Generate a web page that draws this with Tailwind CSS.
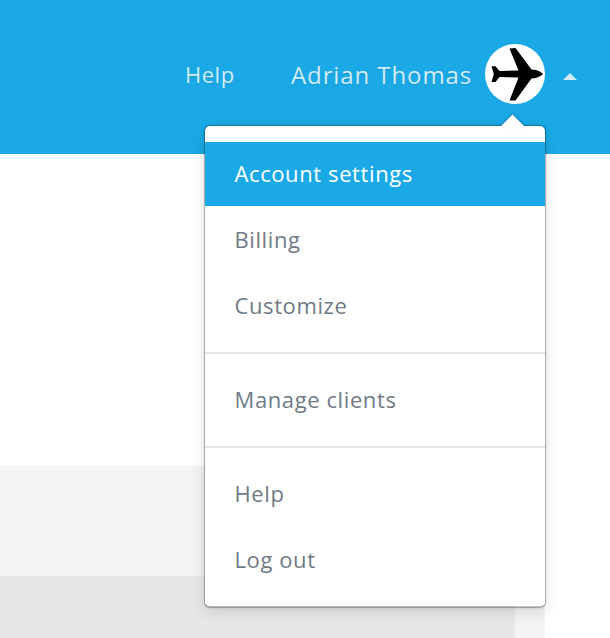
<!DOCTYPE html>
<html lang="en">
<head>
  <meta charset="UTF-8" />
  <title>Account menu</title>
  <script src="https://cdn.jsdelivr.net/npm/@tailwindcss/browser@4"></script>
</head>
<body class="relative w-[610px] h-[638px] overflow-hidden bg-white font-['Open_Sans',sans-serif]">

  <!-- Header -->
  <header class="h-[154px] bg-[#1aa9e6] flex items-start pt-[44px] pl-[185px] text-[#d1edfa]">
    <a class="text-[22px] leading-[60px] w-[106px] tracking-[0.5px] [text-shadow:0_1px_1px_rgba(0,0,0,0.12)]">Help</a>
    <span class="text-[24px] leading-[60px] w-[194px] tracking-[0.9px] translate-y-[1px] [text-shadow:0_1px_1px_rgba(0,0,0,0.12)]">Adrian Thomas</span>
    <div class="w-[60px] h-[60px] rounded-full bg-white flex items-center justify-center">
      <svg width="60" height="60" viewBox="0 0 60 60">
        <path fill="#000" d="M24.5 4.5 L30.5 4 L46.5 25.5 L51 26 Q56 27.5 58 30 Q56 32.5 51 34 L46.5 34.5 L30.5 56.5 L24.5 56.5 L33.5 33.5 L14.5 33 L10.5 38 L6.5 38 L8.8 30 L6.5 22.3 L10.5 22.3 L14.5 27 L33.5 26.5 Z" />
      </svg>
    </div>
    <div class="ml-[18px] mt-[29px] w-0 h-0 border-x-[7px] border-x-transparent border-b-[7px] border-b-[#d1edfa]"></div>
  </header>

  <!-- Page behind the menu -->
  <div class="mt-[312px] w-[545px] h-[172px] bg-[#f3f3f3] flex flex-col justify-end">
    <div class="w-[515px] h-[62px] bg-[#e7e7e7]"></div>
  </div>

  <!-- Dropdown -->
  <div class="absolute left-[204px] top-[125px] w-[342px] h-[483px] bg-white bg-clip-padding rounded-[6px] border border-black/20 border-b-2 shadow-[0_0_2px_rgba(0,0,0,0.12),0_4px_14px_rgba(0,0,0,0.12)]">
    <div class="absolute left-[299px] -top-[8px] w-[17px] h-[17px] rotate-45 bg-white shadow-[-1px_-1px_2px_rgba(0,0,0,0.2)]"></div>
    <ul class="relative pt-[16px] text-[22px] leading-[66px] text-[#6f7b86] tracking-[0.6px]">
      <li class="h-[64px] leading-[62px] px-[29.5px] bg-[#1aa9e6] text-white">Account settings</li>
      <li class="h-[66px] px-[29.5px]">Billing</li>
      <li class="h-[66px] px-[29.5px]">Customize</li>
      <li class="mt-[14px] border-t-2 border-[#e3e6e8] pt-[12px] h-[94px] px-[29.5px]">Manage clients</li>
      <li class="border-t-2 border-[#e3e6e8] pt-[12px] h-[80px] px-[29.5px]">Help</li>
      <li class="h-[66px] px-[29.5px]">Log out</li>
    </ul>
  </div>
</body>
</html>
